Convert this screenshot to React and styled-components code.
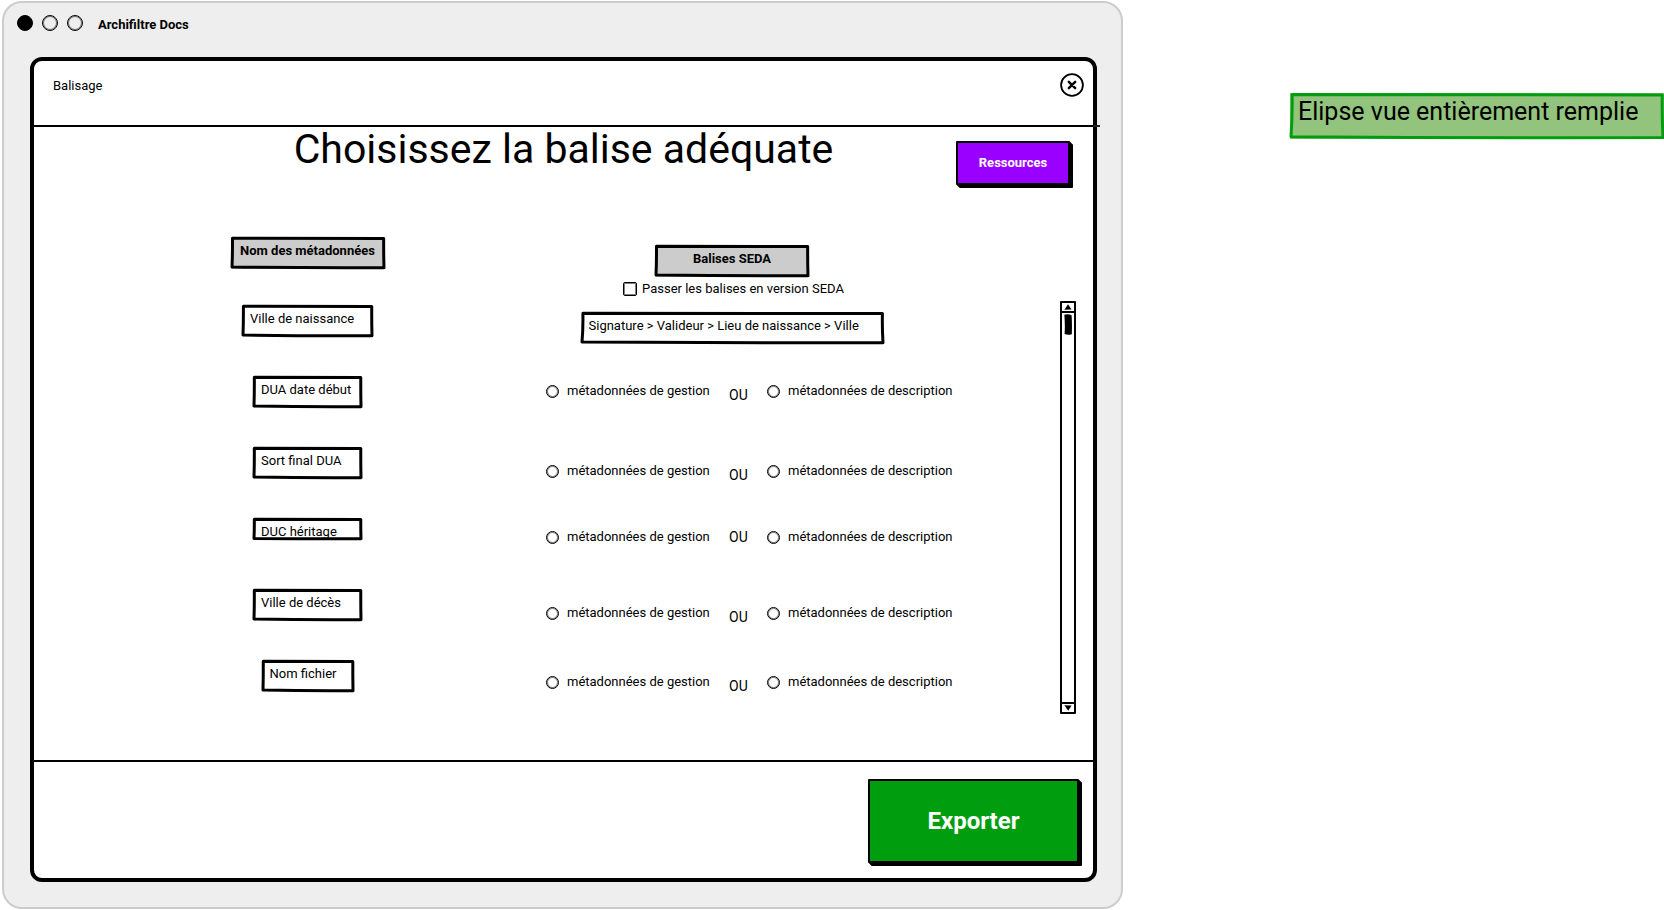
import React from "react";
import styled, { createGlobalStyle } from "styled-components";

const GlobalStyle = createGlobalStyle`
  *, *::before, *::after { box-sizing: border-box; }
  body {
    margin: 0;
    background: #fff;
    color: #000;
    font: 400 13px/16px Roboto, "Liberation Sans", sans-serif;
  }
  button, input { font: inherit; color: inherit; margin: 0; padding: 0; }
`;

const Page = styled.div`
  display: flex;
  align-items: flex-start;
  gap: 167px;
  padding: 1px 0 1px 2px;
`;

/* Application window */
const AppWindow = styled.section`
  flex: 1;
  min-width: 900px;
  padding: 0 24px 25px 26px;
  border: 2px solid #ccc;
  border-radius: 20px;
  background: #eee;
`;

const TitleBar = styled.header`
  display: flex;
  align-items: center;
  gap: 9px;
  height: 54px;
  margin-left: -13px;
  padding-bottom: 14px;
`;

const Light = styled.span`
  width: 16px;
  height: 16px;
  border: 1px solid #000;
  border-radius: 50%;
  background: ${({ $filled }) => ($filled ? "#000" : "transparent")};
  box-shadow: inset 0 0 0 1px rgba(0, 0, 0, 0.5);
`;

const AppName = styled.h1`
  margin: 4px 0 0 6px;
  font-size: 13px;
  font-weight: 700;
`;

/* Dialog */
const Dialog = styled.main`
  border: 4px solid #000;
  border-radius: 12px;
  background: #fff;
`;

const DialogHeader = styled.div`
  position: relative;
  display: flex;
  justify-content: space-between;
  align-items: flex-start;
  height: 66px;
  padding: 12px 9px 0 19px;
  border-bottom: 2px solid #000;

  &::after {
    content: "";
    position: absolute;
    right: -7px;
    bottom: -2px;
    width: 7px;
    height: 2px;
    background: #222;
  }
`;

const DialogName = styled.span`
  line-height: 25px;
`;

const CloseButton = styled.button`
  width: 24px;
  height: 24px;
  border: 0;
  background: none;
  cursor: pointer;

  svg { display: block; }
`;

const Heading = styled.div`
  display: grid;
  grid-template-columns: 1fr auto 1fr;
  align-items: start;
  min-height: 110px;
`;

const Question = styled.h2`
  grid-column: 2;
  margin: 0;
  font-size: 41px;
  line-height: 44px;
  font-weight: 400;
`;

/* Hand-drawn frame behind boxes */
const OutlineSvg = styled.svg`
  position: absolute;
  inset: 1px;
  width: calc(100% - 2px);
  height: calc(100% - 2px);
  overflow: visible;
  pointer-events: none;

  path {
    fill: none;
    stroke: ${({ $color }) => $color};
    stroke-width: 3px;
    stroke-linejoin: round;
    vector-effect: non-scaling-stroke;
  }
`;

const Outline = ({ color = "#000" }) => (
  <OutlineSvg $color={color} viewBox="0 0 100 100" preserveAspectRatio="none" aria-hidden="true">
    <path d="M0.3 1 Q50 2 99.8 2 Q99.7 50 100 99 Q50 100 0 97 Q0.4 50 0.3 1 Z" />
  </OutlineSvg>
);

const ActionButton = styled.button`
  width: ${({ $large }) => ($large ? 211 : 114)}px;
  height: ${({ $large }) => ($large ? 84 : 44)}px;
  border: 2px solid #000;
  border-radius: 1px;
  background: ${({ $color }) => $color};
  box-shadow: 1px 1px 0 #000, 2px 2px 0 #000, 3px 3px 0 #000;
  color: #fff;
  font-size: ${({ $large }) => ($large ? 24 : 13)}px;
  font-weight: 700;
  cursor: pointer;
`;

const HeadingAction = styled.div`
  display: flex;
  justify-content: flex-end;
  padding: 14px 23px 0 0;
`;

/* Mapping area */
const Mapping = styled.div`
  display: grid;
  grid-template-columns: 475fr 446fr 138fr;
  min-height: 523px;
`;

const NameColumn = styled.div`
  display: flex;
  flex-direction: column;
  align-items: center;
  padding-left: 72px;
`;

const NameList = styled.ul`
  display: grid;
  grid-auto-rows: 71px;
  justify-items: center;
  align-items: start;
  margin: 36px 0 0;
  padding: 0;
  list-style: none;
`;

const TagColumn = styled.div`
  display: flex;
  flex-direction: column;
  align-items: center;
  padding-top: 8px;
`;

const Box = styled.div`
  position: relative;
  width: ${({ $width }) => $width}px;
  height: ${({ $short }) => ($short ? 22 : 32)}px;
  padding: 6px 8px;
  white-space: nowrap;
`;

const ColumnTitle = styled(Box)`
  background: #ccc;
  font-weight: 700;
  text-align: center;
`;

const CheckLabel = styled.label`
  display: flex;
  align-items: center;
  gap: 5px;
  margin: 4px 0 15px;
  padding-left: 3px;
`;

const Checkbox = styled.input`
  appearance: none;
  width: 14px;
  height: 14px;
  border: 1px solid #000;
  border-radius: 2px;
  box-shadow: inset 0 0 0 1px rgba(0, 0, 0, 0.5);
  &:checked { background: #000; }
`;

const ChoiceRow = styled.div`
  display: grid;
  grid-template-columns: 183px 38px 188px;
  align-items: center;
  align-self: flex-end;
  height: 24px;
  margin-top: ${({ $space }) => $space}px;
`;

const Choice = styled.label`
  display: flex;
  align-items: center;
  gap: 8px;
`;

const Radio = styled.input`
  appearance: none;
  width: 13px;
  height: 13px;
  border: 1px solid #000;
  border-radius: 50%;
  box-shadow: inset 0 0 0 1px rgba(0, 0, 0, 0.5);
  &:checked { background: #000; }
`;

const Or = styled.span`
  padding-top: ${({ $low }) => ($low ? 8 : 0)}px;
  font-size: 14px;
`;

/* Scroll bar */
const ScrollBar = styled.div`
  display: flex;
  flex-direction: column;
  justify-self: end;
  align-items: center;
  width: 16px;
  margin: 64px 17px 46px 0;
  border: 2px solid #000;
  border-radius: 1px;
`;

const Track = styled.div`
  flex: 1;
  align-self: stretch;
  padding: 1px 2px;
  border: solid #000;
  border-width: 2px 0;
`;

const ArrowButton = styled.button`
  display: grid;
  place-items: center;
  width: 12px;
  height: 8px;
  border: 0;
  background: none;
`;

const ThumbSvg = styled.svg`
  display: block;
`;

const Footer = styled.footer`
  display: flex;
  justify-content: flex-end;
  align-items: flex-start;
  height: 118px;
  padding: 17px 14px 0 0;
  border-top: 2px solid #000;
`;

/* Annotation beside the window */
const Note = styled.aside`
  position: relative;
  flex: 0 0 374px;
  height: 46px;
  margin-top: 92px;
  padding: 4px 8px;
  background: #93c47d;
  font-size: 25px;
  line-height: 30px;
  white-space: nowrap;
`;

const names = [
  { label: "Ville de naissance", width: 131 },
  { label: "DUA date début", width: 109 },
  { label: "Sort final DUA", width: 109 },
  { label: "DUC héritage", width: 109, short: true },
  { label: "Ville de décès", width: 109 },
  { label: "Nom fichier", width: 92 },
];

const choices = [
  { id: "dua-debut", space: 35, low: true },
  { id: "sort-final", space: 56, low: true },
  { id: "duc-heritage", space: 42, low: false },
  { id: "ville-deces", space: 52, low: true },
  { id: "nom-fichier", space: 45, low: true },
];

export default function App() {
  return (
    <>
      <GlobalStyle />
      <Page>
        <AppWindow>
          <TitleBar>
            <Light $filled />
            <Light />
            <Light />
            <AppName>Archifiltre Docs</AppName>
          </TitleBar>
          <Dialog>
            <DialogHeader>
              <DialogName>Balisage</DialogName>
              <CloseButton aria-label="Fermer">
                <svg width="24" height="24" viewBox="0 0 24 24" fill="none" stroke="#000">
                  <circle cx="12" cy="12" r="10.9" strokeWidth="1.8" />
                  <path d="M8.8 8.8 15.2 15.2M15.2 8.8 8.8 15.2" strokeWidth="2.4" strokeLinecap="round" />
                </svg>
              </CloseButton>
            </DialogHeader>

            <Heading>
              <Question>Choisissez la balise adéquate</Question>
              <HeadingAction>
                <ActionButton $color="#9900ff">Ressources</ActionButton>
              </HeadingAction>
            </Heading>

            <Mapping>
              <NameColumn>
                <ColumnTitle $width={154}>
                  <Outline />
                  Nom des métadonnées
                </ColumnTitle>
                <NameList>
                  {names.map(({ label, width, short }) => (
                    <Box as="li" key={label} $width={width} $short={short}>
                      <Outline />
                      {label}
                    </Box>
                  ))}
                </NameList>
              </NameColumn>

              <TagColumn>
                <ColumnTitle $width={154}>
                  <Outline />
                  Balises SEDA
                </ColumnTitle>
                <CheckLabel>
                  <Checkbox type="checkbox" />
                  Passer les balises en version SEDA
                </CheckLabel>
                <Box $width={303}>
                  <Outline />
                  Signature &gt; Valideur &gt; Lieu de naissance &gt; Ville
                </Box>
                {choices.map(({ id, space, low }) => (
                  <ChoiceRow key={id} $space={space}>
                    <Choice>
                      <Radio type="radio" name={id} value="gestion" />
                      métadonnées de gestion
                    </Choice>
                    <Or $low={low}>OU</Or>
                    <Choice>
                      <Radio type="radio" name={id} value="description" />
                      métadonnées de description
                    </Choice>
                  </ChoiceRow>
                ))}
              </TagColumn>

              <ScrollBar>
                <ArrowButton aria-label="Défiler vers le haut">
                  <svg width="8" height="6" viewBox="0 0 8 6">
                    <path d="M4 0.3 7.6 5.4 0.4 5.7Z" />
                  </svg>
                </ArrowButton>
                <Track>
                  <ThumbSvg width="8" height="21" viewBox="0 0 8 21">
                    <path d="M0.3 0.8Q4 -0.3 7.6 1.2Q8.2 10 7.8 20.2Q4 21.3 0.6 20Q1.2 10 0.3 0.8Z" />
                  </ThumbSvg>
                </Track>
                <ArrowButton aria-label="Défiler vers le bas">
                  <svg width="8" height="6" viewBox="0 0 8 6">
                    <path d="M0.4 0.3 7.6 0.6 4.2 5.7Z" />
                  </svg>
                </ArrowButton>
              </ScrollBar>
            </Mapping>

            <Footer>
              <ActionButton $large $color="#009e0f">Exporter</ActionButton>
            </Footer>
          </Dialog>
        </AppWindow>

        <Note>
          <Outline color="#009e0f" />
          Elipse vue entièrement remplie
        </Note>
      </Page>
    </>
  );
}
